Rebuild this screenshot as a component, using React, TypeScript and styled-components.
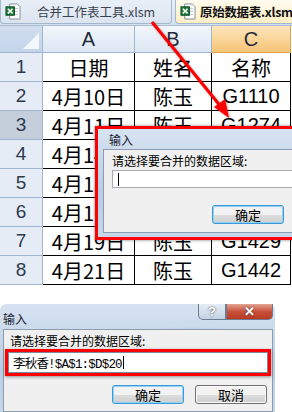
import React from "react";
import styled, { createGlobalStyle } from "styled-components";

const GlobalStyle = createGlobalStyle`
  html, body { margin: 0; padding: 0; background: #fff; }
  body { font-family: "Noto Sans CJK SC", "Liberation Sans", sans-serif; }
`;

const Screen = styled.div`
  position: relative;
  width: 292px;
  height: 412px;
  overflow: hidden;
  background: #fff;
`;

const TabBar = styled.div`
  display: flex;
  align-items: flex-end;
  height: 26px;
  background: linear-gradient(#e7eef7, #d5e0ee);
  border-bottom: 1px solid #a9bcd3;
  box-sizing: border-box;
`;

const Tab = styled.div<{ active?: boolean }>`
  display: flex;
  align-items: center;
  flex-shrink: 0;
  gap: ${({ active }) => (active ? "4px" : "16px")};
  height: 24px;
  padding-left: 4px;
  margin-left: ${({ active }) => (active ? "3px" : "0")};
  width: ${({ active }) => (active ? "130px" : "172px")};
  box-sizing: border-box;
  align-self: flex-start;
  border: 1px solid #a5b7cc;
  border-top: none;
  border-radius: 0 0 4px 4px;
  background: ${({ active }) =>
    active ? "linear-gradient(#fffbee, #fdeec4)" : "linear-gradient(#e9eff7, #dbe4ef)"};
  font-size: 12.5px;
  font-weight: ${({ active }) => (active ? 700 : 400)};
  letter-spacing: ${({ active }) => (active ? "-0.3px" : "0")};
  color: ${({ active }) => (active ? "#111" : "#3b4250")};
  white-space: nowrap;
  overflow: hidden;

  & > svg {
    flex-shrink: 0;
  }
`;

const Grid = styled.div`
  display: grid;
  grid-template-columns: 43px 92px 77px 79px;
  grid-template-rows: 27px repeat(8, 29px);
`;

const Corner = styled.div`
  position: relative;
  background: linear-gradient(#d2def0, #c3d4ea);
  border-right: 1px solid #9fb5d0;
  border-bottom: 1px solid #9fb5d0;
  box-sizing: border-box;
`;

const CornerTriangle = styled.div`
  position: absolute;
  right: 3px;
  bottom: 3px;
  width: 0;
  height: 0;
  border-left: 16px solid transparent;
  border-bottom: 16px solid #f4f7fb;
`;

const ColHead = styled.div<{ selected?: boolean }>`
  display: flex;
  align-items: center;
  justify-content: center;
  font-family: "Liberation Sans", sans-serif;
  font-size: 20px;
  color: #1f2a3b;
  background: ${({ selected }) =>
    selected ? "linear-gradient(#fde6bd, #f7c476)" : "linear-gradient(#f2f6fb, #dde7f3)"};
  border-right: 1px solid ${({ selected }) => (selected ? "#e2a24c" : "#9fb5d0")};
  border-bottom: 1px solid ${({ selected }) => (selected ? "#e2a24c" : "#9fb5d0")};
  box-sizing: border-box;
`;

const RowHead = styled.div<{ selected?: boolean }>`
  display: flex;
  align-items: center;
  justify-content: center;
  font-family: "Liberation Sans", sans-serif;
  font-size: 19px;
  color: #2d3a4e;
  background: ${({ selected }) => (selected ? "#c5cfdc" : "#e5ecf6")};
  border-right: 1px solid #9fb5d0;
  border-bottom: 1px solid #9fb5d0;
  box-sizing: border-box;
`;

const Cell = styled.div<{ latin?: boolean }>`
  display: flex;
  align-items: center;
  justify-content: center;
  font-family: ${({ latin }) =>
    latin ? '"Liberation Sans", sans-serif' : '"Noto Sans CJK SC", sans-serif'};
  font-size: 20px;
  color: #000;
  border-right: 1px solid #000;
  border-bottom: 1px solid #000;
  box-sizing: border-box;
  white-space: nowrap;
  overflow: hidden;
`;

const Glass = styled.div`
  background:
    radial-gradient(ellipse 60px 10px at 70% 30%, rgba(140, 170, 205, 0.7), transparent),
    radial-gradient(ellipse 40px 8px at 30% 70%, rgba(160, 185, 215, 0.6), transparent),
    linear-gradient(#d6e3f1, #b9cde4 60%, #c6d7ea);
`;

const TopDialog = styled(Glass)`
  position: absolute;
  left: 95px;
  top: 126px;
  width: 210px;
  height: 114px;
  border: 3px solid #f00;
  box-sizing: border-box;
  padding: 0 0 4px 5px;
  display: flex;
  flex-direction: column;
  box-shadow: 0 0 3px rgba(0, 0, 0, 0.5);
`;

const TitleText = styled.div`
  height: 20px;
  display: flex;
  align-items: center;
  font-size: 12px;
  color: #1b2230;
  padding-left: 6px;
`;

const Panel = styled.div`
  flex: 1;
  background: #f0f0f0;
  border: 1px solid #8b9bb0;
  padding: 4px 0 0 8px;
  display: flex;
  flex-direction: column;
  box-sizing: border-box;
`;

const Label = styled.div`
  font-size: 12px;
  line-height: 14px;
  color: #000;
`;

const Input = styled.div`
  margin-top: 2px;
  height: 18px;
  background: #fff;
  border: 1px solid #abadb3;
  display: flex;
  align-items: center;
  padding-left: 4px;
  font-family: "Liberation Mono", "Noto Sans CJK SC", monospace;
  font-size: 12px;
  letter-spacing: -0.8px;
  color: #000;
  box-sizing: border-box;
`;

const Caret = styled.span`
  display: inline-block;
  width: 1px;
  height: 13px;
  margin-left: 1px;
  background: #000;
`;

const Buttons = styled.div`
  display: flex;
  gap: 11px;
  margin-top: auto;
  margin-bottom: 8px;
  padding-left: 100px;
`;

const Button = styled.div<{ focused?: boolean }>`
  width: 72px;
  height: 19px;
  flex-shrink: 0;
  display: flex;
  align-items: center;
  justify-content: center;
  font-size: 13px;
  color: #000;
  border: 1px solid ${({ focused }) => (focused ? "#3c9ad8" : "#707070")};
  border-radius: 3px;
  background: linear-gradient(#f2f2f2 50%, #dddddd 50%, #cfcfcf);
  box-shadow: ${({ focused }) => (focused ? "inset 0 0 0 1px #8fd2f7" : "inset 0 0 0 1px #fcfcfc")};
  box-sizing: border-box;
`;

const Below = styled.div`
  padding-top: 19px;
`;

const BottomDialog = styled(Glass)`
  width: 275px;
  height: 108px;
  border-radius: 6px 6px 0 0;
  padding: 0 2px 0 3px;
  display: flex;
  flex-direction: column;
  box-sizing: border-box;
`;

const TitleRow = styled.div`
  display: flex;
  align-items: flex-start;
  height: 25px;
`;

const BottomTitle = styled(TitleText)`
  padding-left: 0;
  margin-top: 4px;
  flex: 1;
`;

const CaptionButton = styled.div<{ close?: boolean }>`
  width: ${({ close }) => (close ? "47px" : "28px")};
  height: 16px;
  display: flex;
  align-items: center;
  justify-content: center;
  font-family: "Liberation Sans", sans-serif;
  font-weight: 700;
  font-size: 13px;
  color: #fff;
  text-shadow: 0 0 2px #333;
  border: 1px solid #6d7b8c;
  border-top: none;
  border-radius: ${({ close }) => (close ? "0 0 5px 0" : "0 0 0 5px")};
  background: ${({ close }) =>
    close ? "linear-gradient(#e3a393, #c8513b 50%, #b83a24)" : "linear-gradient(#e6eef7, #c2d2e4)"};
  box-sizing: border-box;
`;

const BottomPanel = styled(Panel)`
  padding: 4px 4px 0 6px;
`;

const RedFrame = styled.div`
  margin: 1px -3px 0 -5px;
  border: 3px solid #f00;
  box-shadow: 0 1px 3px rgba(0, 0, 0, 0.4);
`;

const BigInput = styled(Input)`
  margin: 0;
  height: 21px;
  border: 1px solid #7a8a9c;
  font-size: 12.5px;
`;

const BottomButtons = styled(Buttons)`
  padding-left: 102px;
  margin-bottom: 7px;
`;

const Overlay = styled.svg`
  position: absolute;
  left: 0;
  top: 0;
  pointer-events: none;
`;

const XlsIcon = () => (
  <svg width="16" height="17" viewBox="0 0 17 18">
    <path d="M5 1h8l3 3v13H5z" fill="#fff" stroke="#7f8b99" />
    <path d="M8 6h6M8 9h6M8 12h6" stroke="#b7c3cf" />
    <rect x="1" y="4" width="9" height="9" fill="#1f7a3a" stroke="#0e4d22" />
    <path d="M3 6l5 5M8 6l-5 5" stroke="#fff" strokeWidth="1.6" />
  </svg>
);

const rows: [string, string, string][] = [
  ["日期", "姓名", "名称"],
  ["4月10日", "陈玉", "G1110"],
  ["4月11日", "陈玉", "G1274"],
  ["4月14日", "陈玉", "G1311"],
  ["4月15日", "陈玉", "G1350"],
  ["4月16日", "陈玉", "G1388"],
  ["4月19日", "陈玉", "G1429"],
  ["4月21日", "陈玉", "G1442"],
];

export default function App() {
  return (
    <Screen>
      <GlobalStyle />
      <TabBar>
        <Tab>
          <XlsIcon />
          合并工作表工具.xlsm
        </Tab>
        <Tab active>
          <XlsIcon />
          原始数据表.xlsm
        </Tab>
      </TabBar>
      <Grid>
        <Corner>
          <CornerTriangle />
        </Corner>
        <ColHead>A</ColHead>
        <ColHead>B</ColHead>
        <ColHead selected>C</ColHead>
        {rows.map((r, i) => (
          <React.Fragment key={i}>
            <RowHead selected={i === 2}>{i + 1}</RowHead>
            <Cell>{r[0]}</Cell>
            <Cell>{r[1]}</Cell>
            <Cell latin={i > 0}>{r[2]}</Cell>
          </React.Fragment>
        ))}
      </Grid>

      <TopDialog>
        <TitleText>输入</TitleText>
        <Panel>
          <Label>请选择要合并的数据区域:</Label>
          <Input>
            <Caret />
          </Input>
          <Buttons>
            <Button focused>确定</Button>
          </Buttons>
        </Panel>
      </TopDialog>

      <Below>
        <BottomDialog>
          <TitleRow>
            <BottomTitle>输入</BottomTitle>
            <CaptionButton>?</CaptionButton>
            <CaptionButton close>✕</CaptionButton>
          </TitleRow>
          <BottomPanel>
            <Label>请选择要合并的数据区域:</Label>
            <RedFrame>
              <BigInput>
                李秋香!$A$1:$D$20
                <Caret />
              </BigInput>
            </RedFrame>
            <BottomButtons>
              <Button focused>确定</Button>
              <Button>取消</Button>
            </BottomButtons>
          </BottomPanel>
        </BottomDialog>
      </Below>

      <Overlay width="292" height="412">
        <defs>
          <filter id="sh" x="-20%" y="-20%" width="140%" height="140%">
            <feDropShadow dx="1" dy="1" stdDeviation="1" floodOpacity="0.4" />
          </filter>
        </defs>
        <g filter="url(#sh)">
          <line x1="152" y1="22" x2="222" y2="108" stroke="#f00" strokeWidth="3" />
          <polygon points="229,118 214,107 225,99" fill="#f00" />
        </g>
      </Overlay>
    </Screen>
  );
}
